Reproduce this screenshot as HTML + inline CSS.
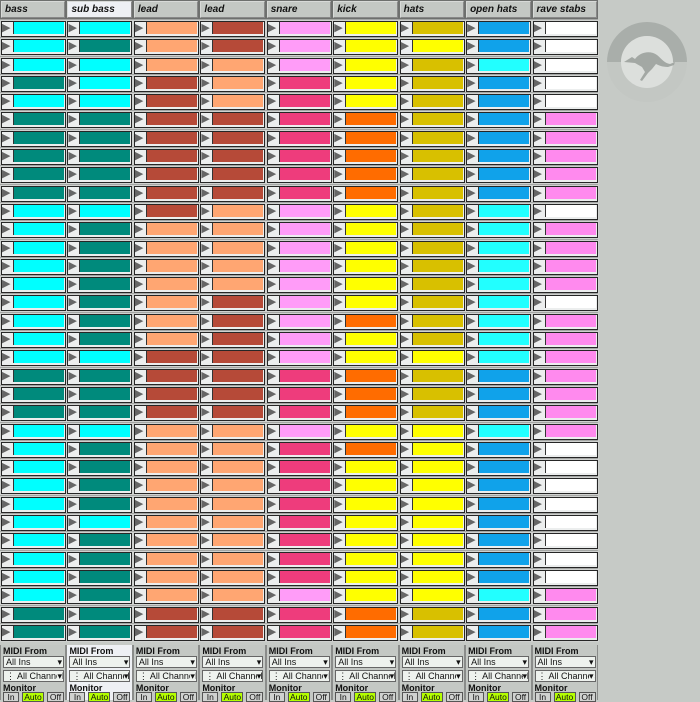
<!DOCTYPE html>
<html><head><meta charset="utf-8"><style>
*{margin:0;padding:0;box-sizing:border-box}
body{width:700px;height:700px;overflow:hidden;background:#c6cac6;font-family:"Liberation Sans",sans-serif;position:relative}
.hd{position:absolute;left:0;top:0;width:598px;height:19px;display:grid;grid-template-columns:repeat(9,66.44px);background:#6e706e}
.hd div{background:#c4c8c4;margin:1px 1px 1px 1px;font:italic bold 10px "Liberation Sans",sans-serif;padding:2px 0 0 3px;color:#111;border:1px solid #d8dad8;border-right-color:#888;border-bottom-color:#888}
.hd div.sel,.bt>div.sel{background:#eef0f4}
.g{position:absolute;left:0;top:19px;width:598px;display:grid;grid-template-columns:repeat(9,66.44px);grid-auto-rows:18.3px;background:#6c6e6c}
.g i{position:relative;display:block;border-top:1px solid #a4a6a4}
.g i::before{content:'\25B6';position:absolute;left:1px;top:1px;width:63px;height:14px;border:1px solid #262626;outline:1px solid #cfd1cf;background:#eceeee;color:#666;font-size:11px;line-height:12px;padding-left:0px;overflow:hidden;font-family:"DejaVu Sans",sans-serif}
.g i::after{content:'';position:absolute;left:13px;top:2px;width:50px;height:12px;background:var(--c);border-left:1px solid #333}
.g i:nth-child(9n+1).a,.g i:nth-child(9n+2).a{--c:#00ffff}
.g i:nth-child(9n+1).b,.g i:nth-child(9n+2).b{--c:#008a7c}
.g i:nth-child(9n+3).a,.g i:nth-child(9n+4).a{--c:#ffa672}
.g i:nth-child(9n+3).b,.g i:nth-child(9n+4).b{--c:#b64a38}
.g i:nth-child(9n+5).a{--c:#ff9cf8}
.g i:nth-child(9n+5).b{--c:#ee3c7c}
.g i:nth-child(9n+6).a{--c:#ffff00}
.g i:nth-child(9n+6).b{--c:#ff6c00}
.g i:nth-child(9n+7).a{--c:#ffff00}
.g i:nth-child(9n+7).b{--c:#d8c000}
.g i:nth-child(9n+8).a{--c:#22ffff}
.g i:nth-child(9n+8).b{--c:#10a2ea}
.g i:nth-child(9n).a{--c:#ffffff}
.g i:nth-child(9n).b{--c:#ff8aee}
.bt{position:absolute;left:0;top:645px;width:598px;height:55px;display:grid;grid-template-columns:repeat(9,66.44px);background:#8a8c8a}
.bt>div{background:#c4c8c4;margin:0 1px;position:relative;font-size:9px;color:#111}
.bt b{position:absolute;left:2px;font-weight:bold;font-size:9px}
.dd{position:absolute;left:2px;width:61px;height:12px;background:#eef2ee;border:1px solid #666;font-size:9px;line-height:10px;padding-left:2px;white-space:nowrap;overflow:hidden}
.dd::after{content:'\25BE';position:absolute;right:1px;top:0;font-size:9px;background:#eef2ee}
.bn{position:absolute;top:47px;height:10px;border:1px solid #555;background:#d0d2d0;font-size:8.5px;line-height:9px;text-align:center}
.logo{position:absolute;left:602px;top:17px}
</style></head><body>
<div class="hd"><div>bass</div><div class="sel">sub bass</div><div>lead</div><div>lead</div><div>snare</div><div>kick</div><div>hats</div><div>open hats</div><div>rave stabs</div></div>
<div class="g">
<i class=a></i><i class=a></i><i class=a></i><i class=b></i><i class=a></i><i class=a></i><i class=b></i><i class=b></i><i class=a></i>
<i class=a></i><i class=b></i><i class=a></i><i class=b></i><i class=a></i><i class=a></i><i class=a></i><i class=b></i><i class=a></i>
<i class=a></i><i class=a></i><i class=a></i><i class=a></i><i class=a></i><i class=a></i><i class=b></i><i class=a></i><i class=a></i>
<i class=b></i><i class=a></i><i class=b></i><i class=a></i><i class=b></i><i class=a></i><i class=b></i><i class=b></i><i class=a></i>
<i class=a></i><i class=a></i><i class=b></i><i class=a></i><i class=b></i><i class=a></i><i class=b></i><i class=b></i><i class=a></i>
<i class=b></i><i class=b></i><i class=b></i><i class=b></i><i class=b></i><i class=b></i><i class=b></i><i class=b></i><i class=b></i>
<i class=b></i><i class=b></i><i class=b></i><i class=b></i><i class=b></i><i class=b></i><i class=b></i><i class=b></i><i class=b></i>
<i class=b></i><i class=b></i><i class=b></i><i class=b></i><i class=b></i><i class=b></i><i class=b></i><i class=b></i><i class=b></i>
<i class=b></i><i class=b></i><i class=b></i><i class=b></i><i class=b></i><i class=b></i><i class=b></i><i class=b></i><i class=b></i>
<i class=b></i><i class=b></i><i class=b></i><i class=b></i><i class=b></i><i class=b></i><i class=b></i><i class=b></i><i class=b></i>
<i class=a></i><i class=a></i><i class=b></i><i class=a></i><i class=a></i><i class=a></i><i class=b></i><i class=a></i><i class=a></i>
<i class=a></i><i class=b></i><i class=a></i><i class=a></i><i class=a></i><i class=a></i><i class=b></i><i class=a></i><i class=b></i>
<i class=a></i><i class=b></i><i class=a></i><i class=a></i><i class=a></i><i class=a></i><i class=b></i><i class=a></i><i class=b></i>
<i class=a></i><i class=b></i><i class=a></i><i class=a></i><i class=a></i><i class=a></i><i class=b></i><i class=a></i><i class=b></i>
<i class=a></i><i class=b></i><i class=a></i><i class=a></i><i class=a></i><i class=a></i><i class=b></i><i class=a></i><i class=b></i>
<i class=a></i><i class=b></i><i class=a></i><i class=b></i><i class=a></i><i class=a></i><i class=b></i><i class=a></i><i class=a></i>
<i class=a></i><i class=b></i><i class=a></i><i class=b></i><i class=a></i><i class=b></i><i class=b></i><i class=a></i><i class=b></i>
<i class=a></i><i class=b></i><i class=a></i><i class=b></i><i class=a></i><i class=a></i><i class=b></i><i class=a></i><i class=b></i>
<i class=a></i><i class=a></i><i class=b></i><i class=b></i><i class=a></i><i class=a></i><i class=a></i><i class=a></i><i class=b></i>
<i class=b></i><i class=b></i><i class=b></i><i class=b></i><i class=b></i><i class=b></i><i class=b></i><i class=b></i><i class=b></i>
<i class=b></i><i class=b></i><i class=b></i><i class=b></i><i class=b></i><i class=b></i><i class=b></i><i class=b></i><i class=b></i>
<i class=b></i><i class=b></i><i class=b></i><i class=b></i><i class=b></i><i class=b></i><i class=b></i><i class=b></i><i class=b></i>
<i class=a></i><i class=a></i><i class=a></i><i class=a></i><i class=a></i><i class=a></i><i class=a></i><i class=a></i><i class=b></i>
<i class=a></i><i class=b></i><i class=a></i><i class=a></i><i class=b></i><i class=b></i><i class=a></i><i class=b></i><i class=a></i>
<i class=a></i><i class=b></i><i class=a></i><i class=a></i><i class=b></i><i class=a></i><i class=a></i><i class=b></i><i class=a></i>
<i class=a></i><i class=b></i><i class=a></i><i class=a></i><i class=b></i><i class=a></i><i class=a></i><i class=b></i><i class=a></i>
<i class=a></i><i class=b></i><i class=a></i><i class=a></i><i class=b></i><i class=a></i><i class=a></i><i class=b></i><i class=a></i>
<i class=a></i><i class=a></i><i class=a></i><i class=a></i><i class=b></i><i class=a></i><i class=a></i><i class=b></i><i class=a></i>
<i class=a></i><i class=b></i><i class=a></i><i class=a></i><i class=b></i><i class=a></i><i class=a></i><i class=b></i><i class=a></i>
<i class=a></i><i class=b></i><i class=a></i><i class=a></i><i class=b></i><i class=a></i><i class=a></i><i class=b></i><i class=a></i>
<i class=a></i><i class=b></i><i class=a></i><i class=a></i><i class=b></i><i class=a></i><i class=a></i><i class=b></i><i class=a></i>
<i class=a></i><i class=b></i><i class=a></i><i class=a></i><i class=a></i><i class=a></i><i class=a></i><i class=a></i><i class=b></i>
<i class=b></i><i class=b></i><i class=b></i><i class=b></i><i class=b></i><i class=b></i><i class=b></i><i class=b></i><i class=b></i>
<i class=b></i><i class=b></i><i class=b></i><i class=b></i><i class=b></i><i class=b></i><i class=b></i><i class=b></i><i class=b></i>
</div>
<div class="bt">
<div><b style="top:1px">MIDI From</b><div class="dd" style="top:11px">All Ins</div><div class="dd" style="top:25px">&#8942; All Channels</div><b style="top:38px">Monitor</b><div class="bn" style="left:2px;width:16px">In</div><div class="bn" style="left:21px;width:22px;background:#b4ff00">Auto</div><div class="bn" style="left:46px;width:17px">Off</div></div>
<div class="sel"><b style="top:1px">MIDI From</b><div class="dd" style="top:11px">All Ins</div><div class="dd" style="top:25px">&#8942; All Channels</div><b style="top:38px">Monitor</b><div class="bn" style="left:2px;width:16px">In</div><div class="bn" style="left:21px;width:22px;background:#b4ff00">Auto</div><div class="bn" style="left:46px;width:17px">Off</div></div>
<div><b style="top:1px">MIDI From</b><div class="dd" style="top:11px">All Ins</div><div class="dd" style="top:25px">&#8942; All Channels</div><b style="top:38px">Monitor</b><div class="bn" style="left:2px;width:16px">In</div><div class="bn" style="left:21px;width:22px;background:#b4ff00">Auto</div><div class="bn" style="left:46px;width:17px">Off</div></div>
<div><b style="top:1px">MIDI From</b><div class="dd" style="top:11px">All Ins</div><div class="dd" style="top:25px">&#8942; All Channels</div><b style="top:38px">Monitor</b><div class="bn" style="left:2px;width:16px">In</div><div class="bn" style="left:21px;width:22px;background:#b4ff00">Auto</div><div class="bn" style="left:46px;width:17px">Off</div></div>
<div><b style="top:1px">MIDI From</b><div class="dd" style="top:11px">All Ins</div><div class="dd" style="top:25px">&#8942; All Channels</div><b style="top:38px">Monitor</b><div class="bn" style="left:2px;width:16px">In</div><div class="bn" style="left:21px;width:22px;background:#b4ff00">Auto</div><div class="bn" style="left:46px;width:17px">Off</div></div>
<div><b style="top:1px">MIDI From</b><div class="dd" style="top:11px">All Ins</div><div class="dd" style="top:25px">&#8942; All Channels</div><b style="top:38px">Monitor</b><div class="bn" style="left:2px;width:16px">In</div><div class="bn" style="left:21px;width:22px;background:#b4ff00">Auto</div><div class="bn" style="left:46px;width:17px">Off</div></div>
<div><b style="top:1px">MIDI From</b><div class="dd" style="top:11px">All Ins</div><div class="dd" style="top:25px">&#8942; All Channels</div><b style="top:38px">Monitor</b><div class="bn" style="left:2px;width:16px">In</div><div class="bn" style="left:21px;width:22px;background:#b4ff00">Auto</div><div class="bn" style="left:46px;width:17px">Off</div></div>
<div><b style="top:1px">MIDI From</b><div class="dd" style="top:11px">All Ins</div><div class="dd" style="top:25px">&#8942; All Channels</div><b style="top:38px">Monitor</b><div class="bn" style="left:2px;width:16px">In</div><div class="bn" style="left:21px;width:22px;background:#b4ff00">Auto</div><div class="bn" style="left:46px;width:17px">Off</div></div>
<div><b style="top:1px">MIDI From</b><div class="dd" style="top:11px">All Ins</div><div class="dd" style="top:25px">&#8942; All Channels</div><b style="top:38px">Monitor</b><div class="bn" style="left:2px;width:16px">In</div><div class="bn" style="left:21px;width:22px;background:#b4ff00">Auto</div><div class="bn" style="left:46px;width:17px">Off</div></div>
</div>
<svg class="logo" width="90" height="90" viewBox="0 0 90 90">
<circle cx="45" cy="45" r="40" fill="#c3c7c3"/>
<path d="M5 45 A40 40 0 0 1 85 45 L71 45 A26 26 0 0 0 19 45 Z" fill="#a9aeaa"/>
<circle cx="45" cy="45" r="26" fill="#dcdfdc"/>
<path d="M22 45 L30 40 L33 42 C38 35 48 33 55 38 C60 42 62 46 68 47 L73 45 L72 48 L66 50 C60 50 56 48 54 47 L50 52 L46 56 L40 64 L38 63 L43 55 L40 50 L33 46 Z" fill="#a3a8a4"/>
</svg>
</body></html>
